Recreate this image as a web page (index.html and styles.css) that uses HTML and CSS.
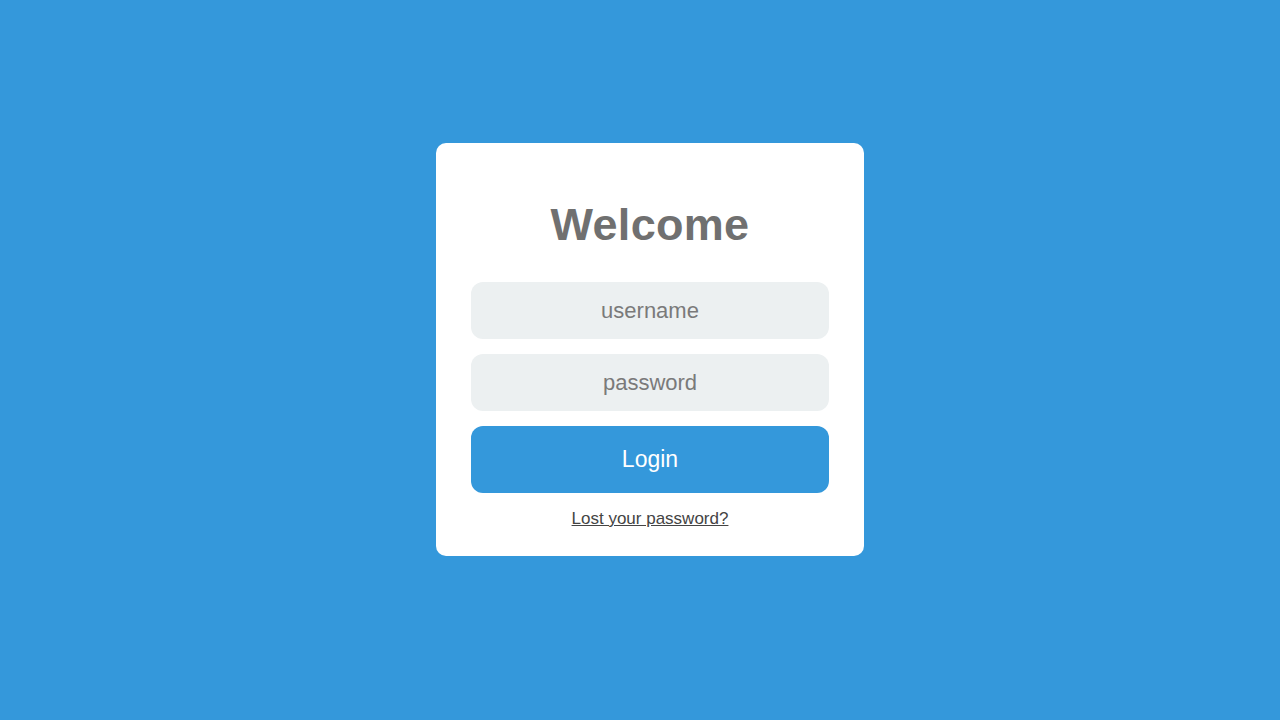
FILE: index.html
```html
<!DOCTYPE html>
<html lang="en">
<head>
<meta charset="utf-8">
<title>Login</title>
<link rel="stylesheet" href="styles.css">
</head>
<body>
  <main class="stage">
    <form class="login-card" onsubmit="return false">
      <h1 class="login-title">Welcome</h1>
      <input class="field" type="text" placeholder="username">
      <input class="field" type="password" placeholder="password">
      <button class="login-btn" type="submit">Login</button>
      <a class="lost-link" href="#">Lost your password?</a>
    </form>
  </main>
</body>
</html>
```

FILE: styles.css
```css
* {
  box-sizing: border-box;
}

html, body {
  margin: 0;
  height: 100%;
}

body {
  background: #3498db;
  font-family: "Liberation Sans", Arial, sans-serif;
}

.stage {
  height: 100%;
  display: flex;
  align-items: center;
  justify-content: center;
  padding: 0 0 21px 20px;
}

.login-card {
  width: 428px;
  background: #ffffff;
  border-radius: 10px;
  padding: 57px 35px 27px;
  display: flex;
  flex-direction: column;
  align-items: stretch;
}

.login-title {
  margin: 0 0 32px;
  font-size: 45px;
  line-height: 50px;
  font-weight: bold;
  letter-spacing: 0.3px;
  color: #707070;
  text-align: center;
}

.field {
  height: 57px;
  margin: 0 0 15px;
  border: none;
  border-radius: 12px;
  background: #ecf0f1;
  font-family: inherit;
  font-size: 22px;
  color: #555;
  text-align: center;
  outline: none;
}

.field::placeholder {
  color: #7a7a7a;
}

.login-btn {
  height: 67px;
  border: none;
  border-radius: 12px;
  background: #3498db;
  color: #ffffff;
  font-family: inherit;
  font-size: 23px;
  cursor: pointer;
}

.lost-link {
  margin-top: 16px;
  font-size: 17px;
  line-height: 20px;
  color: #444444;
  text-align: center;
  text-decoration: underline;
}
```
